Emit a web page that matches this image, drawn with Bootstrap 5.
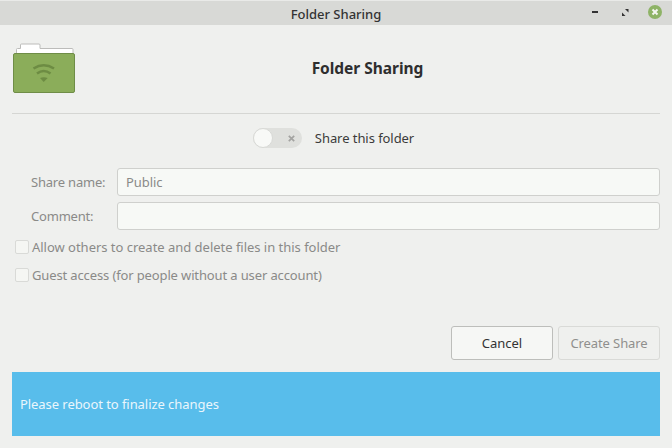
<!DOCTYPE html>
<html lang="en">
<head>
<meta charset="utf-8">
<title>Folder Sharing</title>
<link href="https://cdn.jsdelivr.net/npm/bootstrap@5.3.0/dist/css/bootstrap.min.css" rel="stylesheet">
<style>
html,body{height:448px;overflow:hidden}
body{width:672px;background:#eff0ee;font-family:"Noto Sans","Open Sans",sans-serif;font-size:13px;letter-spacing:-.06px;color:#3b3b3b;line-height:1.2}
.titlebar{height:25px;background:#d8d9d6;border-top:1px solid #e9eae8}
.title-text{font-weight:500;font-size:13px;letter-spacing:0;color:#333;left:0;right:0;top:6px;text-align:center}
.wm-min{top:4px;left:585px}
.wm-max{top:3px;left:618px}
.wm-close{top:3px;left:647px}
.head-row{height:88px;padding:16px 12px 0 13px}
.head-title{font-size:15.5px;font-weight:700;color:#2e2e2e;margin-left:-2px;margin-top:18px;letter-spacing:-.03px}
.rule{height:1px;background:#d5d6d3;margin:0 12px}
.share-row{height:47px;margin-bottom:7px;padding:1px 5px 0 0}
.share-text{margin-left:13px;padding-top:2px}
.sw{width:49px;height:20px;border-radius:10px;background:#dfe0dd;padding-right:7px}
.sw-knob{width:20px;height:20px;border-radius:50%;background:#f8f9f7;border:1px solid #d8d9d6;left:0;top:0}
.form-area{padding:0 12px}
.lbl{width:105px;padding:2px 0 0 19px;color:#8a8a88;letter-spacing:-.2px}
.fld{flex:1;height:28px;background:#f7f9f6;border:1px solid #cfd0cd;border-radius:3px;padding:0 8px;color:#8a8a88;line-height:26px}
.fld-row{height:28px;margin-bottom:6px}
.chk-first{margin-top:8px;letter-spacing:-.02px}
.chk-row{height:18px;color:#8a8a88;padding-left:3px;margin-bottom:10px}
.chk-guest{letter-spacing:-.13px}
.chk-text{padding-top:2px}
.chk-box{width:14px;height:14px;background:#f5f6f3;border:1px solid #d9dad7;border-radius:2px;margin-right:3px}
.btn-row{padding:0 12px;margin-top:42px;column-gap:5px}
.act{width:102px;height:34px;border-radius:3px;font-size:13px;line-height:1;padding:0}
.act-cancel{background:#f6f7f5;border:1px solid #bdbebb;color:#333}
.act-create:disabled{background:#eff0ee;border:1px solid #d9dad7;color:#8f8f8d;opacity:1;letter-spacing:-.1px}
.info-bar{height:64px;margin:12px 12px 0;background:#58bdeb;color:#eaf6fc;padding:2px 0 0 8px}
</style>
</head>
<body>
<div class="titlebar position-relative">
  <div class="title-text position-absolute">Folder Sharing</div>
  <svg class="wm-min position-absolute" width="14" height="16" viewBox="0 0 14 16"><rect x="7" y="6" width="6" height="2" fill="#333"/></svg>
  <svg class="wm-max position-absolute" width="12" height="16" viewBox="0 0 12 16"><path d="M7 5h3.500v3.500z" fill="#333"/><path d="M4 8.500 7.500 12H4z" fill="#333"/></svg>
  <svg class="wm-close position-absolute" width="16" height="16" viewBox="0 0 16 16"><circle cx="8" cy="8" r="7" fill="#8eb366"/><path d="M5.500 5.500l5 5M10.500 5.500l-5 5" stroke="#f4f6f0" stroke-width="2"/></svg>
</div>
<div class="head-row d-flex align-items-start">
  <svg width="64" height="52" viewBox="0 0 64 52">
    <path d="M3.500 14V8.500a1 1 0 0 1 1-1H7.500V4a1 1 0 0 1 1-1h17.500a1 1 0 0 1 1 1v3.500h32a1 1 0 0 1 1 1V14z" fill="#fff" stroke="#bcbcba"/>
    <rect x="0.500" y="12.500" width="61" height="39" rx="1.500" fill="#8bad5a" stroke="#6f8d47"/>
    <g fill="none" stroke="#6d8c43" stroke-width="2.600"><path d="M20.500 27.500Q30.700 21 41 27.500"/><path d="M24 32.500Q30.700 27.500 37.500 32.500"/></g>
    <path d="M27 37Q30.700 35.500 34.700 37L30.700 41z" fill="#6d8c43"/>
  </svg>
  <div class="head-title flex-grow-1 text-center">Folder Sharing</div>
</div>
<div class="rule"></div>
<div class="share-row d-flex align-items-center justify-content-center">
  <div class="sw position-relative d-flex align-items-center justify-content-end">
    <span class="sw-knob position-absolute"></span>
    <svg width="7" height="7" viewBox="0 0 7 7"><path d="M.8.800l5.400 5.400M6.200.800.8 6.200" stroke="#a3a3a1" stroke-width="1.700"/></svg>
  </div>
  <span class="share-text">Share this folder</span>
</div>
<div class="form-area">
  <div class="fld-row d-flex align-items-center"><div class="lbl">Share name:</div><div class="fld">Public</div></div>
  <div class="fld-row d-flex align-items-center"><div class="lbl">Comment:</div><div class="fld"></div></div>
  <div class="chk-row chk-first d-flex align-items-center"><span class="chk-box"></span><span class="chk-text">Allow others to create and delete files in this folder</span></div>
  <div class="chk-row chk-guest d-flex align-items-center"><span class="chk-box"></span><span class="chk-text">Guest access (for people without a user account)</span></div>
</div>
<div class="btn-row d-flex justify-content-end">
  <button type="button" class="btn act act-cancel">Cancel</button>
  <button type="button" class="btn act act-create" disabled>Create Share</button>
</div>
<div class="info-bar d-flex align-items-center">Please reboot to finalize changes</div>
<script src="https://cdn.jsdelivr.net/npm/bootstrap@5.3.0/dist/js/bootstrap.bundle.min.js"></script>
</body>
</html>
